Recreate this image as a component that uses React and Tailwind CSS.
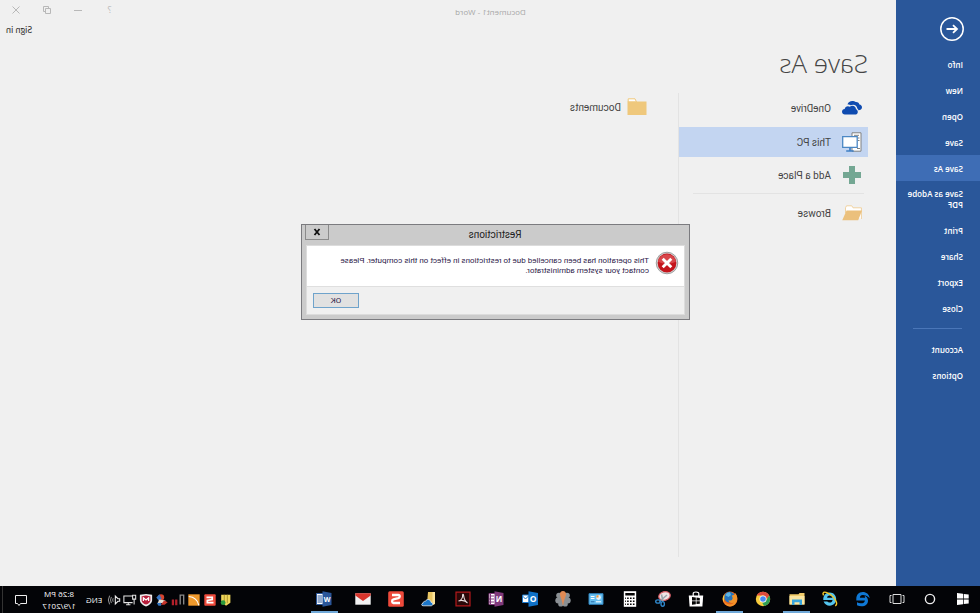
import { useState } from 'react';

const menu = ['Info', 'New', 'Open', 'Save', 'Save As', 'Save as Adobe PDF', 'Print', 'Share', 'Export', 'Close'];
const accountMenu = ['Account', 'Options'];

function BackIcon() {
  return (
    <svg viewBox="0 0 24 24" className="h-6 w-6" fill="none" stroke="#fff">
      <circle cx="12" cy="12" r="11.2" strokeWidth="1.5" />
      <path d="M17.500 12H7M11 8.200L7 12l4 3.800" strokeWidth="1.8" />
    </svg>
  );
}

function OneDriveIcon() {
  return (
    <svg viewBox="0 0 20 14" className="h-3.5 w-5">
      <path fill="#0f4bb0" d="M3.600 9.300C1.500 9.300 0 8 0 6.300 0 4.700 1.100 3.600 2.600 3.400 3.200 1.500 4.800.800 6.300 1 7.300.200 8.500 0 9.700 0c2.300 0 4.300 1.300 4.800 3.600-1.500-.1-2.300.2-3 .7C8.300 2.700 5 4.300 4.700 7.400c-.6.300-1 1-1.100 1.900z" />
      <path fill="#0f4bb0" d="M7.300 13.600c-1.900 0-3.100-1.100-3.100-2.700 0-1.400.8-2.300 1.800-2.600.1-2.200 1.600-3.600 3.600-3.600 1.100 0 1.900.4 2.500 1 2.200-1.300 5-.2 5.200 2.400 1.600.2 2.700 1.200 2.700 2.700 0 1.600-1.200 2.800-2.900 2.800z" />
    </svg>
  );
}

function PcIcon() {
  return (
    <svg viewBox="0 0 20 20" className="h-5 w-5">
      <path d="M1 .8h9v18.400H1z" fill="#fff" stroke="#808080" />
      <path d="M3 3.300h5M2.500 6h2M2.500 8.500h2M2 16.500h3" stroke="#808080" />
      <path d="M4.800 4.700h14.500v10.600H4.800z" fill="#fff" stroke="#4b87c4" strokeWidth="1.300" />
      <path d="M12 15.500v3M8.300 19h7.500" stroke="#3f7fc4" strokeWidth="1.700" />
    </svg>
  );
}

function PlusIcon() {
  return (
    <svg viewBox="0 0 20 20" className="h-5 w-5">
      <path fill="#74a793" d="M7 1h6v6h6v6h-6v6H7v-6H1V7h6z" />
    </svg>
  );
}

function BrowseIcon() {
  return (
    <svg viewBox="0 0 20 16" className="h-4 w-5">
      <path d="M.6 14V2.800h8.400l1.200-2h5.300l1 2V8" fill="#fff" stroke="#f0d2a0" />
      <path d="M.3 15.300L4.500 5.500H20l-3.800 9.800z" fill="#ebc07c" transform="matrix(-1 0 0 1 20 0)" />
    </svg>
  );
}

function FolderIcon() {
  return (
    <svg viewBox="0 0 20 18" className="h-[18px] w-5">
      <path d="M10.500 4l1.500-3.200h6.800V4z" fill="#fff" stroke="#efc87c" />
      <path d="M.5 3.500h19V17H.5z" fill="#efc87c" />
    </svg>
  );
}

function ErrorIcon() {
  return (
    <svg viewBox="0 0 24 24" className="h-6 w-6 shrink-0">
      <circle cx="12" cy="12" r="10.800" fill="#d4d4d4" stroke="#8f8f8f" strokeWidth=".8" />
      <circle cx="12" cy="12" r="9.400" fill="#c4151c" />
      <path d="M3 10.500a9.200 9.200 0 0 1 18 0c-5 3-13 3-18 0z" fill="#d8474b" />
      <path d="M7.700 7.700l8.600 8.600M16.300 7.700l-8.600 8.600" stroke="#fff" strokeWidth="2.900" />
    </svg>
  );
}

const letter = { fontFamily: '"Open Sans", sans-serif', fontWeight: 700, textAnchor: 'middle' };

const apps = [
  { name: 'Start', icon: <path fill="#fff" d="M2.300 3.600l5-.7v4.700h-5zM8 2.800l6-.8v5.600H8zM2.300 8.400h5v4.700l-5-.7zM8 8.400h6V14l-6-.8z" /> },
  { name: 'Search', icon: <circle cx="8" cy="8" r="4.600" fill="none" stroke="#eee" strokeWidth="1.400" /> },
  { name: 'Task View', icon: <path fill="none" stroke="#ddd" d="M4 3.500h8v9H4zM2.500 4.500H1v7h1.500M13.500 4.500H15v7h-1.500" /> },
  { name: 'Edge', icon: <path fill="#0f78d4" d="M1.300 7.200C1.900 3.300 4.700 1.100 8.200 1.100c4.300 0 6.500 3 6.500 6.900v1.400H6.100c.1 2.100 1.900 2.900 4 2.900 1.500 0 2.800-.4 3.900-1.100v3c-1.300.7-2.900 1-4.600 1-3.700 0-6.400-2-6.400-5.500C3 7.400 4.500 5.500 6.700 4.500c-.5.600-.7 1.400-.8 2.300h5.200c0-1.900-1-2.900-2.900-2.900-2.900 0-5.400 1.300-6.900 3.300z" /> },
  {
    name: 'Internet Explorer',
    icon: (
      <>
        <path fill="#54c5ee" d="M8.200 1.500C4.500 1.500 1.800 4.400 1.800 8.100s2.700 6.600 6.500 6.600c2.800 0 5.200-1.600 6.100-4.200h-3.700c-.5.700-1.300 1.100-2.300 1.100-1.600 0-2.900-1-2.900-2.600h9.200C15 4.500 12.300 1.500 8.200 1.500zM5.600 6.700C5.800 5.300 7 4.500 8.300 4.500s2.500.8 2.600 2.200z" />
        <path fill="none" stroke="#f3c726" strokeWidth="1.400" d="M2.800 14.800C-.8 13.300 3 7 7.300 3.800c3-2.200 6.700-3.500 7.500-2 .4.700.1 1.600-.4 2.500" />
      </>
    ),
  },
  {
    name: 'File Explorer',
    active: true,
    icon: (
      <>
        <path fill="#f2cd6b" d="M.5 2h5l1 1.200h9v10.300H.5z" />
        <path fill="#fbe6a2" d="M.5 5h15v8.500H.5z" />
        <path fill="#39a5dc" d="M3 8.500h10V14h-2.500v-2.800h-5V14H3z" />
      </>
    ),
  },
  {
    name: 'Chrome',
    icon: (
      <>
        <circle cx="8" cy="8" r="7.200" fill="#f8cc3c" />
        <path fill="#dd4b3e" d="M1.800 4.400A7.200 7.200 0 0 1 14.300 4.500H8a3.500 3.500 0 0 0-3.300 4.800z" />
        <path fill="#2fa056" d="M1.800 4.400l3.200 5.400a3.500 3.500 0 0 0 4 1.500L7 15.100A7.200 7.200 0 0 1 1.800 4.400z" />
        <circle cx="8" cy="8" r="3.500" fill="#fff" />
        <circle cx="8" cy="8" r="2.800" fill="#4a8af4" />
      </>
    ),
  },
  {
    name: 'Firefox',
    active: true,
    icon: (
      <>
        <circle cx="8" cy="8" r="7.500" fill="#e8661b" />
        <circle cx="8.500" cy="6.200" r="5.400" fill="#2675bd" />
        <path fill="#5db6e6" d="M8 1.200c2 0 4 1.300 4.700 3L9.500 6 7 4z" />
        <path fill="#f2932a" d="M.8 7c0-2 .9-3.800 2-5 0 1 .4 1.600 1 2 1 0 2 .2 2.500.8L5.300 7c.2 2 2 3.200 4.200 2.300 0 2-3 3.500-5.500 2.200 2 3 8 3 10.500-2.500-.5 3.500-3.500 6.400-6.500 6.400C4 15.400.8 12 .8 7z" />
        <path fill="#fbd043" d="M13.500 3.300c1.900 2 2.300 5.200.9 7.700-.3-1-.9-5-.9-7.700z" />
      </>
    ),
  },
  {
    name: 'Store',
    icon: (
      <>
        <path fill="#fff" d="M.8 4.500h14.400l-.8 11H1.600z" />
        <path fill="none" stroke="#fff" strokeWidth="1.200" d="M5.200 5V2.500Q5.200 1 8 1t2.800 1.500V5" />
        <path fill="#050505" d="M4.200 7l3.300-.4v2.900H4.200zM8.200 6.500L12 6v3.500H8.200zM4.200 10.200h3.300v2.900l-3.300-.4zM8.200 10.200H12v3.500l-3.800-.5z" />
      </>
    ),
  },
  {
    name: 'Snipping Tool',
    icon: (
      <>
        <ellipse cx="6.500" cy="5" rx="5.800" ry="4.300" fill="#f1e3e4" stroke="#d25a62" strokeWidth="1.200" transform="rotate(15 6.500 5)" />
        <path stroke="#9aa3ab" strokeWidth="1.500" d="M4 4l7.500 6.500M9.500 3.500l-1.500 7" />
        <g fill="none" stroke="#2f86c9" strokeWidth="1.400">
          <ellipse cx="8.300" cy="12.900" rx="1.700" ry="2.300" />
          <ellipse cx="13" cy="10.500" rx="2.300" ry="1.600" />
        </g>
      </>
    ),
  },
  {
    name: 'Calculator',
    icon: (
      <>
        <path fill="#fff" d="M1.800.2h12.400v15.600H1.800z" />
        <path fill="#050505" d="M3.300 2h9.400v2.500H3.300z" />
        <path stroke="#050505" strokeWidth="1.600" strokeDasharray="1.600 1.300" d="M3.500 7.300h9.500M3.500 10.300h9.500M3.500 13.300h9.500" />
      </>
    ),
  },
  {
    name: 'Control Panel',
    icon: (
      <>
        <path fill="#69c0f0" stroke="#2f83bd" d="M1 2.700h14v10.600H1z" />
        <circle cx="5.500" cy="6.500" r="2.400" fill="#e9f5fc" />
        <path fill="#f0953a" d="M5.500 6.500V4.100a2.400 2.400 0 0 1 2.400 2.400z" />
        <path stroke="#fff" d="M9.500 5.500h3.700M9.500 7.500h3.700M3 10.800h5" />
        <path stroke="#256aa5" d="M9.500 10.800h3.700" />
      </>
    ),
  },
  {
    name: 'Photos',
    icon: (
      <>
        <g fill="#8b9094">
          <circle cx="4" cy="4.500" r="2.800" />
          <circle cx="12" cy="4.500" r="2.800" />
          <circle cx="3.200" cy="9.500" r="2.900" />
          <circle cx="12.800" cy="9.500" r="2.900" />
          <circle cx="5.800" cy="13" r="2.600" />
          <circle cx="10.200" cy="13" r="2.600" />
          <circle cx="8" cy="9" r="4" />
        </g>
        <path fill="#e08a54" d="M8 0c2 0 3.200 1.500 3 3.500C10.800 6 9 8 8.300 14h-.6C7 8 5.200 6 5 3.500 4.800 1.500 6 0 8 0z" />
      </>
    ),
  },
  {
    name: 'Outlook',
    icon: (
      <>
        <path fill="#fff" stroke="#1c78c8" d="M9 4h6.500v7.500H9z" />
        <path fill="none" stroke="#1c78c8" d="M9 4.500l3.500 3.500 3-3" />
        <path fill="#0f71c6" d="M0 2l9.500-1.800v15.600L0 14z" />
        <text x="4.800" y="11.200" fontSize="8.500" fill="#fff" style={letter}>O</text>
      </>
    ),
  },
  {
    name: 'OneNote',
    icon: (
      <>
        <path fill="#fff" stroke="#80397b" d="M8 2.500h7v11H8z" />
        <path stroke="#80397b" d="M10 5h3M10 8h5M10 11h5M13.500 3v10" />
        <path fill="#80397b" d="M.5 2L9.500.2v15.600L.5 14z" />
        <text x="5" y="11" fontSize="8" fill="#fff" style={letter}>N</text>
      </>
    ),
  },
  {
    name: 'Acrobat',
    icon: (
      <>
        <path fill="#2a0808" stroke="#b3191b" strokeWidth="1.200" d="M1 1.200h14v13.600H1z" />
        <path fill="none" stroke="#e8dede" strokeWidth="1.100" d="M3.500 12c1.500-1 3.500-4 4-8 .2-1 1-.8.9.2C8 7 10 9.500 12.500 10M4 11.500c2-2 6-2.500 8.500-1.500" />
      </>
    ),
  },
  {
    name: 'OneDrive',
    icon: (
      <>
        <path fill="#e9c562" d="M2 1h7l1 12H2z" />
        <path fill="#fbe39a" d="M2 1h2.500v13.300L2 13z" />
        <path fill="#1b76c9" stroke="#fff" strokeWidth=".7" d="M6 14.800c-2.400 0-2.400-3.400 0-3.500.2-3.100 4.500-3.900 5.400-1.100 2.200 0 2.700 1.300 2.500 2 1.900.2 1.900 2.600 0 2.600z" />
      </>
    ),
  },
  {
    name: 'Snagit',
    icon: (
      <>
        <rect x=".2" y=".2" width="15.600" height="15.600" rx="1.500" fill="#ee4a3b" />
        <path fill="none" stroke="#fff" strokeWidth="2.300" d="M12 4H5.700Q4.300 4 4.300 5.400T5.700 7.200l4.800 1.200q1.400.4 1.400 1.900T10.500 12H4" />
      </>
    ),
  },
  {
    name: 'Mail',
    icon: (
      <>
        <path fill="#f2f2f2" d="M.3 2.300h15.400v11.400H.3z" />
        <path fill="#d7352c" d="M.3 2.300h15.400v2.200L8 10 .3 4.500z" />
      </>
    ),
  },
];

const word = {
  name: 'Word',
  active: true,
  icon: (
    <>
      <path fill="#fff" stroke="#2a5699" d="M8 2.500h7.500v11H8z" />
      <path stroke="#2a5699" d="M10 5h4.500M10 7h4.500M10 9h4.500M10 11h4.500" />
      <path fill="#2a5699" d="M.5 2L9.500.2v15.600L.5 14z" />
      <text x="5" y="10.800" fontSize="7" fill="#fff" style={letter}>W</text>
    </>
  ),
};

const tray = [
  { name: 'Updates', icon: <><path fill="#efd65a" d="M3 2h10.500v6.500L11 12l-3 2.500-5-3.500z" /><path stroke="#a88f2a" d="M6.500 2v9.500M10 2v8" /><circle cx="11.300" cy="11" r="2.800" fill="#2c9a3c" /></> },
  { name: 'Snagit', icon: <><rect x="1.500" y="1.500" width="13" height="13" rx="1" fill="#ee4a3b" /><path fill="none" stroke="#fff" strokeWidth="2" d="M12 5H5.500v2.500l5.500 1V11H4" /></> },
  { name: 'Audio Manager', icon: <><path fill="#f09a2c" d="M1.500 1.500h13v13h-13z" /><path fill="none" stroke="#fff" strokeWidth="1.300" d="M2 4C8 4.500 12 7.500 13.500 14" transform="matrix(-1 0 0 1 16 0)" /></> },
  { name: 'Network monitor', icon: <><path fill="none" stroke="#8b8b8b" strokeWidth="1.500" d="M1.500 13V2.500h4V13" /><path stroke="#b3202a" strokeWidth="2.600" d="M10 14V7.500M13.800 14V7.500" /></> },
  { name: 'Sync', icon: <><circle cx="9" cy="5" r="3.500" fill="#d6442f" /><path fill="#3776c4" d="M11 1.500l3.500 3.500-3 4-3-2.500z" /><path fill="#e9e2d6" d="M4 8.500l7-1 2 4H5z" /><path fill="#c8352c" d="M1.500 10.500l4-2 4 5H5z" /><path fill="#2e73c0" d="M9 11l5 .5-2 3H9z" /></> },
  { name: 'McAfee', icon: <><path fill="#ececec" d="M1 2L8 1l7 1v6c0 3.500-3.500 6-7 7.500C4.500 14 1 11.500 1 8z" /><path fill="#b71e3b" d="M3 3.700l5-.9 5 .9v4.500c0 2.500-2.500 4-5 5-2.500-1-5-2.500-5-5z" /><path fill="none" stroke="#fff" strokeWidth="1.400" d="M5 9V5.500L8 8l3-2.500V9" /></> },
  { name: 'Network', icon: <path fill="none" stroke="#e5e5e5" strokeWidth="1.200" d="M5 3.500h10v7.500H5M1.500 2.500H5V7H1.500zM3.300 7v6M7.500 13.500h5M10 11v2.500" /> },
  { name: 'Volume', icon: <><path fill="none" stroke="#eee" strokeWidth="1.200" d="M1.500 6.500h2l3-3v9l-3-3h-2z" /><path fill="none" stroke="#aaa" d="M9 6q1 2 0 4M11 4.500q2 3.500 0 7M13 3q3 5 0 10" /></> },
];

function TaskButton({ app }) {
  return (
    <button
      type="button"
      aria-label={app.name}
      className={`flex h-[27px] w-[27px] items-center justify-center border-b-2 ${app.active ? 'border-[#6fa8d8]' : 'border-transparent'}`}
    >
      <svg viewBox="0 0 16 16" className="h-4 w-4">{app.icon}</svg>
    </button>
  );
}

function Place({ icon, label, selected }) {
  return (
    <button
      type="button"
      className={`flex h-[30px] w-full items-center text-left ${selected ? 'bg-[#c3d5f1]' : ''}`}
    >
      <span className="flex w-[37px] justify-center pr-1.5">{icon}</span>
      {label}
    </button>
  );
}

function Sidebar() {
  const [page, setPage] = useState('Save As');
  const item = (name) => (
    <button
      key={name}
      type="button"
      onClick={() => setPage(name)}
      className={`min-h-[26px] w-full py-[7px] pr-2 pl-[17px] text-left leading-[11px] ${page === name ? 'bg-[#3e6db5]' : ''}`}
    >
      {name}
    </button>
  );

  return (
    <nav className="w-[84px] shrink-0 bg-[#2a579a] text-[8px] font-semibold text-white">
      <button type="button" aria-label="Back" className="mt-[17px] mb-2.5 ml-4 block">
        <BackIcon />
      </button>
      {menu.map(item)}
      <hr className="my-[7px] mr-[17px] ml-[18px] border-[#4a76b8]" />
      {accountMenu.map(item)}
    </nav>
  );
}

function Dialog() {
  return (
    <div
      role="dialog"
      aria-labelledby="dialog-title"
      className="absolute top-[224px] left-[290px] w-[389px] border border-[#7b7b7f] bg-[#cbcbcb] px-1 pb-1 font-[Roboto,sans-serif] text-[8px] text-[#2d1a4a]"
    >
      <div className="flex h-5 items-start">
        <h2 id="dialog-title" className="flex-1 pl-6 text-center text-[10px] leading-5 text-[#222]">Restrictions</h2>
        <button type="button" aria-label="Close" className="-mr-px flex h-[15px] w-6 items-center justify-center border border-t-0 border-[#8b8b8b]">
          <svg viewBox="0 0 8 8" className="h-2 w-2" stroke="#111" strokeWidth="1.800">
            <path d="M1.500 1l5 6M6.500 1l-5 6" />
          </svg>
        </button>
      </div>
      <div className="border border-[#dcdcdc] bg-[#f0f0f0]">
        <div className="flex h-[41px] items-start gap-1.5 border-b border-[#dfdfdf] bg-white pt-[5px] pl-[5px]">
          <ErrorIcon />
          <p className="w-[330px] pt-[5px] leading-[10px]">
            This operation has been cancelled due to restrictions in effect on this computer. Please contact your system administrator.
          </p>
        </div>
        <div className="flex h-[27px] items-center justify-end pr-1.5">
          <button type="button" className="h-[15px] w-[46px] border border-[#6fa3cb] bg-[#e1e1e1] leading-3">OK</button>
        </div>
      </div>
    </div>
  );
}

export default function App() {
  return (
    <div className="flex min-h-screen -scale-x-100 flex-col bg-[#f0f0f0] font-['Open_Sans',sans-serif] text-[#444]">
      <div className="flex flex-1">
        <Sidebar />

        <main className="flex flex-1 flex-col">
          <header className="flex h-[42px] text-[8px]">
            <div className="flex-1 pt-1.5 pl-10 text-center leading-3 text-[#a8a8a8]">Document1 - Word</div>
            <div>
              <div className="flex h-5 pr-px text-[#b8b8b8]">
                <button type="button" aria-label="Help" className="w-[31px] text-[9px]">?</button>
                <button type="button" aria-label="Minimize" className="flex w-[31px] items-center justify-center">
                  <svg viewBox="0 0 8 8" className="h-2 w-2" stroke="currentColor"><path d="M0 4.500h8" /></svg>
                </button>
                <button type="button" aria-label="Restore" className="flex w-[31px] items-center justify-center">
                  <svg viewBox="0 0 8 8" className="h-2 w-2" fill="none" stroke="currentColor"><path d="M.5 2.500h5v5h-5zM2.500 2V.5h5v5H6" /></svg>
                </button>
                <button type="button" aria-label="Close" className="flex w-[31px] items-center justify-center">
                  <svg viewBox="0 0 8 8" className="h-2 w-2" stroke="currentColor"><path d="M.5.5l7 7M7.500.5l-7 7" /></svg>
                </button>
              </div>
              <a href="#signin" className="mr-1.5 block text-right font-[Lato,sans-serif] text-[9px] leading-5 text-[#333]">Sign in</a>
            </div>
          </header>

          <div className="flex flex-1 flex-col pb-[29px] pl-7">
            <h1 className="mb-[9px] text-[26px] leading-[42px] font-light">Save As</h1>
            <div className="flex flex-1 font-[Roboto,sans-serif] text-[10px]">
              <div className="w-[190px] border-r border-[#e3e3e3]">
                <Place icon={<OneDriveIcon />} label="OneDrive" />
                <div className="h-1" />
                <Place icon={<PcIcon />} label="This PC" selected />
                <div className="h-[3px]" />
                <Place icon={<PlusIcon />} label="Add a Place" />
                <hr className="mt-[3px] mr-3.5 mb-1 ml-1 border-[#e3e3e3]" />
                <Place icon={<BrowseIcon />} label="Browse" />
              </div>
              <button type="button" className="ml-[31px] flex h-7 items-center gap-1.5">
                <FolderIcon />
                Documents
              </button>
            </div>
          </div>
        </main>
      </div>

      <footer className="flex h-[27px] items-center bg-[#030407] text-white">
        <div className="flex w-[634px] justify-between px-[3px]">
          {apps.map((app) => <TaskButton key={app.name} app={app} />)}
        </div>
        <div className="ml-2">
          <TaskButton app={word} />
        </div>
        <div className="ml-auto flex items-center gap-1 text-[8px]">
          <div className="flex gap-0.5">
            {tray.map((t) => (
              <button key={t.name} type="button" aria-label={t.name}>
                <svg viewBox="0 0 16 16" className="h-3.5 w-3.5">{t.icon}</svg>
              </button>
            ))}
          </div>
          <button type="button" className="w-[18px]">ENG</button>
          <div className="ml-1 w-9 text-center leading-3 whitespace-nowrap">
            <div>8:26 PM</div>
            <div>1/9/2017</div>
          </div>
          <button type="button" aria-label="Notifications" className="mr-2 ml-2.5">
            <svg viewBox="0 0 12 12" className="h-3 w-3" fill="none" stroke="#eee">
              <path d="M.5 1.500h11v8H9.500L8 11.500l-1.500-2h-6z" />
            </svg>
          </button>
          <div className="mr-0.5 h-[27px] border-l border-[#333]" />
        </div>
      </footer>

      <Dialog />
    </div>
  );
}
